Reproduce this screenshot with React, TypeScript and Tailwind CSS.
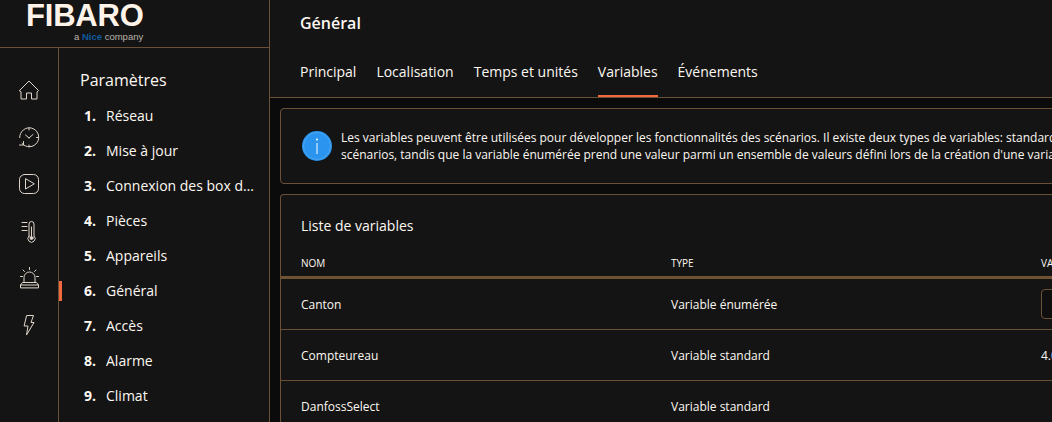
import React from "react";

const menu = [
  "Réseau",
  "Mise à jour",
  "Connexion des box de la maison",
  "Pièces",
  "Appareils",
  "Général",
  "Accès",
  "Alarme",
  "Climat",
];

const tabs = ["Principal", "Localisation", "Temps et unités", "Variables", "Événements"];

const rows = [
  { name: "Canton", type: "Variable énumérée", value: "select" },
  { name: "Compteureau", type: "Variable standard", value: "4.0" },
  { name: "DanfossSelect", type: "Variable standard", value: "" },
];

function RailIcon({ children }: { children: React.ReactNode }) {
  return (
    <svg
      width="24"
      height="24"
      viewBox="0 0 24 24"
      fill="none"
      stroke="#e0d6ca"
      strokeWidth="1"
      strokeLinecap="round"
      strokeLinejoin="round"
    >
      {children}
    </svg>
  );
}

function Rail() {
  return (
    <div className="w-[59px] shrink-0 border-r border-[#6b5038] flex flex-col items-center pt-[30px] gap-[23px]">
      <RailIcon>
        <path d="M2.500 12.500 12 3l9.500 9.500-1.500 1.500v7h-5.500v-6h-5v6H4v-7z" />
      </RailIcon>
      <RailIcon>
        <path d="M5 18.500a9.500 9.500 0 1 0-2.300-6" />
        <path d="M2.500 20H6.500V16.500" />
        <path d="M12 3v2M21.500 12.500h-2M12 22v-2M12 13 8.500 10M12 13l4-3.500" />
      </RailIcon>
      <RailIcon>
        <rect x="2.500" y="2.500" width="19" height="19" rx="5" />
        <path d="M8.500 7v10l8.500-5z" />
      </RailIcon>
      <RailIcon>
        <path d="M12 17V5a2.500 2.500 0 0 1 5 0v12a3.600 3.600 0 1 1-5 0z" />
        <path d="M14.500 8v9" />
        <circle cx="14.500" cy="19" r="1.500" fill="#e0d6ca" />
        <path d="M5 3.500h5M5 7.500h5M5 11.500h5" />
      </RailIcon>
      <RailIcon>
        <path d="M7 16.500v-5a5.500 5.500 0 0 1 11 0v5" />
        <path d="M3.500 21.500v-2.500l2-2.500h14l2 2.500v2.500zM3.500 19h18" />
        <path d="M12.500 1.500v2M6 4l1.500 1.500M19 4l-1.500 1.500M3.500 10.500h2M19.500 10.500h2" />
      </RailIcon>
      <RailIcon>
        <path d="M10 2.500h6.500l-2.500 7h3L9.500 22l1.500-9H7.500z" />
      </RailIcon>
    </div>
  );
}

function SideMenu() {
  return (
    <div className="relative flex-1 min-w-0 border-r border-[#6b5038] pl-[21px] pt-[20px]">
      <div className="text-base leading-[24px] text-[#fdf8f2]">Paramètres</div>
      <ul className="mt-[6px] pl-[4px]">
        {menu.map((item, i) => (
          <li key={item} className="relative h-[35px] flex items-center text-sm">
            {i === 5 && <span className="absolute left-[-25px] top-[8px] w-[3px] h-[20px] bg-[#f2693c]" />}
            <span className="w-[22px] shrink-0 font-bold text-[#fdf8f2]">{i + 1}.</span>
            <span className="w-[152px] truncate text-[#fdf8f2]">{item}</span>
          </li>
        ))}
      </ul>
    </div>
  );
}

export default function App() {
  return (
    <div
      className="w-[1052px] h-[422px] overflow-hidden flex bg-[#141414] text-white"
      style={{ fontFamily: '"Open Sans", sans-serif' }}
    >
      <div className="w-[270px] shrink-0 flex flex-col">
        <div className="h-[48px] shrink-0 border-b border-r border-[#6b5038] pl-[26px] relative">
          <div
            className="text-[31px] leading-[32px] font-bold tracking-[-0.2px] text-[#fdf3e8]"
            style={{ fontFamily: '"Liberation Sans", sans-serif' }}
          >
            FIBARO
          </div>
          <div
            className="absolute left-[74px] top-[31px] text-[9.5px] leading-[12px] text-[#b9b2aa]"
            style={{ fontFamily: '"Liberation Sans", sans-serif' }}
          >
            a <span className="font-bold text-[#0f5a9c]">Nice</span> company
          </div>
        </div>
        <div className="flex-1 flex min-h-0">
          <Rail />
          <SideMenu />
        </div>
      </div>

      <div className="flex-1 min-w-0 flex flex-col">
        <div className="h-[47px] shrink-0 pl-[30px] pb-[2px] flex items-center text-base font-semibold text-[#fdf8f2]">
          Général
        </div>
        <div className="h-[51px] shrink-0 pl-[30px] flex gap-[20px] border-b border-[#6b5038] text-sm">
          {tabs.map((t) => (
            <div
              key={t}
              className={`h-[50px] pt-[2px] flex items-center border-b-2 text-[#fdf8f2] ${
                t === "Variables" ? "border-[#f2693c]" : "border-transparent"
              }`}
            >
              {t}
            </div>
          ))}
        </div>
        <div className="flex-1 min-h-0 bg-[#0b0b0b] pl-[10px] pt-[10px] flex flex-col gap-[10px]">
          <div className="w-[1000px] h-[76px] shrink-0 rounded-l-[4px] border border-[#6b5038] bg-[#141414] pl-[21px] flex items-center gap-[9px]">
            <svg width="30" height="30" viewBox="0 0 30 30" className="shrink-0">
              <circle cx="15" cy="15" r="15" fill="#2a94ee" />
              <circle cx="15" cy="15" r="13.500" fill="none" stroke="#4aa6f2" strokeWidth="1" />
              <circle cx="15" cy="8.500" r="1" fill="#ffffff" />
              <path d="M15 12v11" stroke="#ffffff" strokeWidth="1" />
            </svg>
            <div className="text-xs leading-[17px] whitespace-nowrap text-[#fdf8f2]">
              <div>
                Les variables peuvent être utilisées pour développer les fonctionnalités des scénarios. Il existe deux
                types de variables: standard et énumérée.
              </div>
              <div>
                scénarios, tandis que la variable énumérée prend une valeur parmi un ensemble de valeurs défini lors de
                la création d'une variable.
              </div>
            </div>
          </div>

          <div className="w-[1000px] flex-1 rounded-tl-[4px] border border-b-0 border-[#6b5038] bg-[#141414]">
            <div className="h-[60px] pl-[20px] pt-[1px] flex items-center text-sm text-[#fdf8f2]">Liste de variables</div>
            <div className="h-[21px] pt-[1px] grid grid-cols-[370px_370px_1fr] pl-[20px] text-[10px] font-medium leading-[14px] uppercase text-[#fdf8f2]">
              <div>Nom</div>
              <div>Type</div>
              <div>Valeur</div>
            </div>
            <div className="h-[3px] bg-[#6f5234]" />
            {rows.map((r) => (
              <div
                key={r.name}
                className="h-[51px] grid grid-cols-[370px_370px_1fr] items-center pl-[20px] border-b border-[#6b5038] text-xs text-[#fdf8f2]"
              >
                <div className="pt-[2px]">{r.name}</div>
                <div className="pt-[2px]">{r.type}</div>
                {r.value === "select" ? (
                  <div className="w-[200px] h-[30px] rounded-[4px] border border-[#6b5038] bg-[#0f0f0f]" />
                ) : (
                  <div className="pt-[2px]">{r.value}</div>
                )}
              </div>
            ))}
          </div>
        </div>
      </div>
    </div>
  );
}
